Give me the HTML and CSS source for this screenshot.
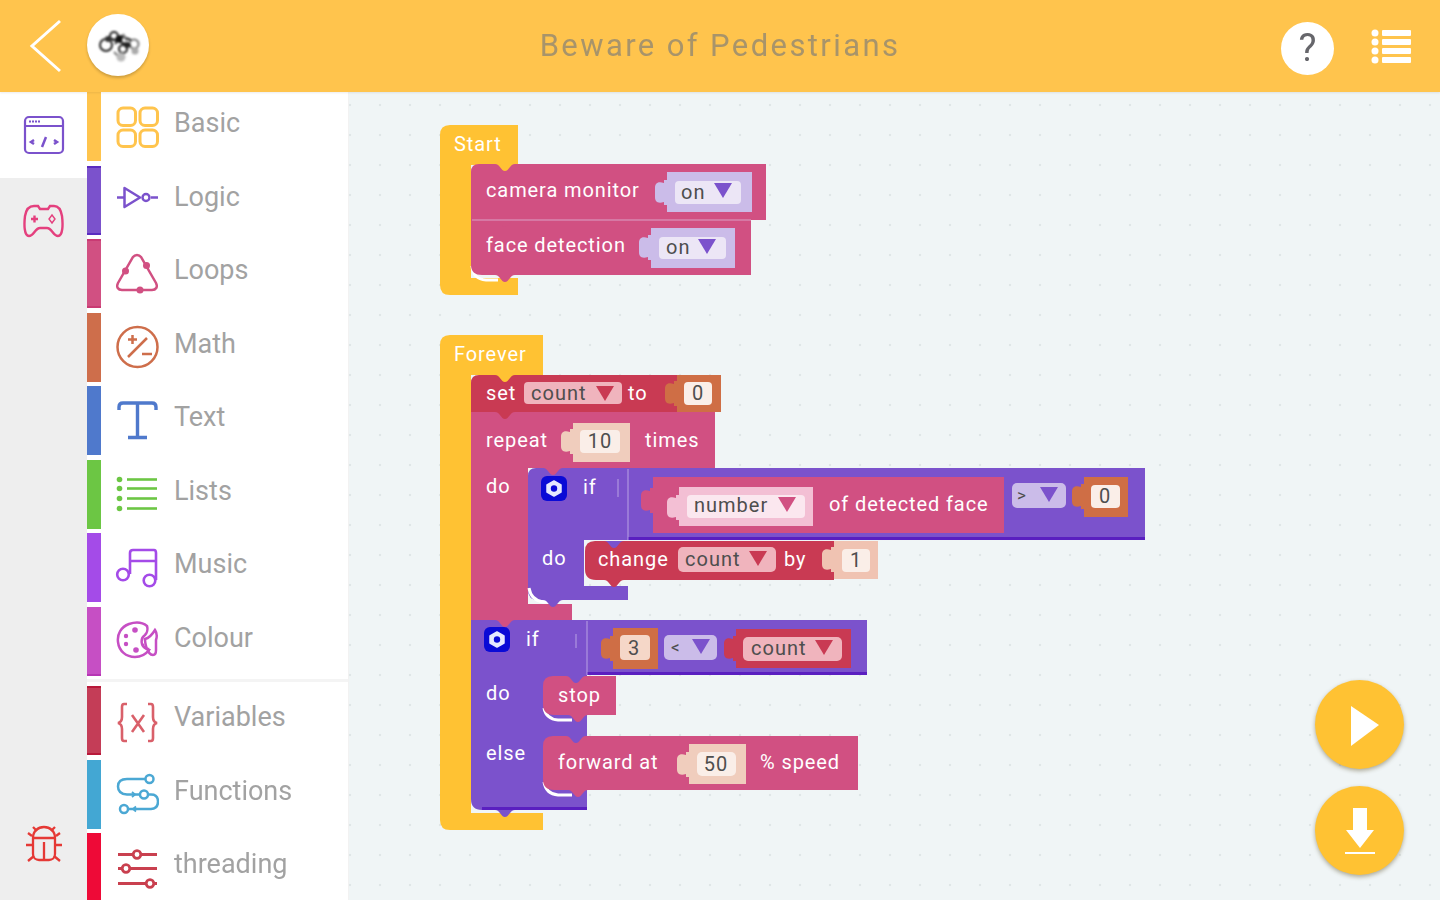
FILE: index.html
```html
<!DOCTYPE html>
<html lang="en">
<head>
<meta charset="utf-8">
<title>Beware of Pedestrians</title>
<link rel="stylesheet" href="styles.css">
</head>
<body>
<div class="app">
  <header class="topbar">
    <div class="top-left">
      <svg class="back" viewBox="0 0 36 56"><path d="M32 3 4 28l28 25"/></svg>
      <div class="logo">
        <svg viewBox="0 0 62 62" class="logo-art">
          <g fill="none" stroke="#222" stroke-width="2">
            <circle cx="19" cy="31" r="6"/><circle cx="27" cy="22" r="4"/><circle cx="36" cy="35" r="4"/><circle cx="47" cy="30" r="4.500" stroke="#777"/>
            <path d="M22 24l14 5 8 3M28 30l6-8 10 4"/><path d="M36 20l4 7M27 38l8 8" stroke="#777"/>
          </g>
          <circle cx="32" cy="25" r="3.500" fill="#111"/><circle cx="21" cy="25" r="3" fill="#333"/><circle cx="34" cy="43" r="4.500" fill="#bbb"/><circle cx="48" cy="37" r="3.500" fill="#aaa"/><circle cx="40" cy="31" r="3" fill="#222"/>
        </svg>
      </div>
    </div>
    <h1 class="title">Beware of Pedestrians</h1>
    <div class="top-right">
      <div class="help">?</div>
      <svg class="menu" viewBox="0 0 40 36"><g fill="#fff"><circle cx="4" cy="4" r="3.500"/><circle cx="4" cy="13" r="3.500"/><circle cx="4" cy="22" r="3.500"/><circle cx="4" cy="31" r="3.500"/><rect x="11" y="1" width="29" height="6" rx="1"/><rect x="11" y="10" width="29" height="6" rx="1"/><rect x="11" y="19" width="29" height="6" rx="1"/><rect x="11" y="28" width="29" height="6" rx="1"/></g></svg>
    </div>
  </header>
  <main class="main">
    <nav class="rail">
      <div class="rail-tab active">
        <svg class="rail-icon" viewBox="0 0 42 40" fill="none" stroke="#7B52CC" stroke-width="2.200"><rect x="2" y="2" width="38" height="36" rx="4"/><path d="M2 11h38"/><path d="M6 6.500h12" stroke-dasharray="2 1"/><path d="M11 25l-3 2 3 2M31 25l3 2-3 2M23 22l-4 10" stroke-width="2.500"/></svg>
      </div>
      <div class="rail-tab">
        <svg class="rail-icon" viewBox="0 0 42 36" fill="none" stroke="#E4407E" stroke-width="2.400"><path d="M11 3h4l2 3h8l2-3h4c5 0 7 4 8 10 1 8 1 20-4 20-5 0-6-8-11-8h-7c-5 0-6 8-11 8-5 0-5-12-4-20C3 7 6 3 11 3z"/><path d="M8 16h7M11.500 12.500v7"/><path d="M29 12l3 4-3 4-3-4z" stroke-width="1.400"/></svg>
      </div>
      <div class="rail-bottom">
        <svg class="bug" viewBox="0 0 40 38" fill="none" stroke="#E53935" stroke-width="2.300"><path d="M9 13c0-7 5-11 11-11s11 4 11 11v16c0 4-3 6-6 6H15c-3 0-6-2-6-6z"/><path d="M9 13h22M20 17v18M13 6 9 2M27 6l4-4M9 20H2M31 20h7M10 31l-6 5M30 31l6 5M8 11 4 8M32 11l4-3"/></svg>
      </div>
    </nav>

    <aside class="cats">
      <div class="cat"><span class="bar bar-basic"></span>
        <svg class="cat-icon" viewBox="0 0 44 44" fill="none" stroke="#FFC44D" stroke-width="3"><rect x="3" y="3" width="17.500" height="17.500" rx="5"/><rect x="25" y="3" width="17.500" height="17.500" rx="5"/><rect x="3" y="25" width="17.500" height="16.500" rx="5"/><rect x="25" y="25" width="17.500" height="16.500" rx="5"/></svg>
        <span class="cat-label">Basic</span></div>
      <div class="cat"><span class="bar bar-logic"></span>
        <svg class="cat-icon" viewBox="0 0 44 44" fill="none" stroke="#7B52CC" stroke-width="2.500"><path d="M2 19.500h7M36 19.500h7"/><path d="M9.500 10 25 19.500 9.500 29z" stroke-linejoin="round"/><circle cx="31" cy="19.500" r="3.500"/></svg>
        <span class="cat-label">Logic</span></div>
      <div class="cat"><span class="bar bar-loops"></span>
        <svg class="cat-icon" viewBox="0 0 44 44" fill="none" stroke="#D15082" stroke-width="2.500"><path d="M18 5a5 5 0 0 1 8 0L41 31c2 4 0 7-4 7H7c-4 0-6-3-4-7z"/><g fill="#D15082" stroke="none"><circle cx="10.500" cy="19" r="3.500"/><circle cx="31.500" cy="13.500" r="3.500"/><circle cx="25" cy="38" r="3.500"/></g></svg>
        <span class="cat-label">Loops</span></div>
      <div class="cat"><span class="bar bar-math"></span>
        <svg class="cat-icon" viewBox="0 0 44 44" fill="none" stroke="#CE6E4B" stroke-width="2.500"><circle cx="22.500" cy="22" r="20"/><path d="M13 32 32 13M13 14.500h9M17.500 10v9M27 29h10"/></svg>
        <span class="cat-label">Math</span></div>
      <div class="cat"><span class="bar bar-text"></span>
        <svg class="cat-icon" viewBox="0 0 44 44" fill="none" stroke="#4F79CC" stroke-width="3.400"><path d="M4 11V8q0-4 4-4h29q4 0 4 4v3M22.500 4v34M13 38.500h19"/></svg>
        <span class="cat-label">Text</span></div>
      <div class="cat"><span class="bar bar-lists"></span>
        <svg class="cat-icon" viewBox="0 0 44 44" fill="none" stroke="#6CC644" stroke-width="2.600"><path d="M12 7.500h30"/><path d="M12 16.500h30"/><path d="M12 26.500h30"/><path d="M12 36.500h30"/><g fill="#6CC644" stroke="none"><circle cx="4.500" cy="7.500" r="2.800"/><circle cx="4.500" cy="16.500" r="2.800"/><circle cx="4.500" cy="26.500" r="2.800"/><circle cx="4.500" cy="36.500" r="2.800"/></g></svg>
        <span class="cat-label">Lists</span></div>
      <div class="cat"><span class="bar bar-music"></span>
        <svg class="cat-icon" viewBox="0 0 44 44" fill="none" stroke="#A44BE8" stroke-width="2.600"><circle cx="8" cy="28.500" r="5.800"/><circle cx="34.500" cy="34.500" r="5.800"/><path d="M15 28V7q0-3 3-3h21q2 0 2 3v27M15 15h26"/></svg>
        <span class="cat-label">Music</span></div>
      <div class="cat"><span class="bar bar-colour"></span>
        <svg class="cat-icon" viewBox="0 0 44 44" fill="none" stroke="#C64FC4" stroke-width="2.500"><path d="M32 7C27 3 20 3 14 5 6 8 2 15 3 23c1 9 8 15 17 15 6 0 11-3 14-7-3-1-6-3-7-6-1-4 0-7 3-9 2-2 3-6 2-9z"/><path d="M30 20c4-1 7-4 10-9 2 3 2 7 1 10v10c0 3-1 5-3 5-3 0-5-3-5-6-2 0-3-7-3-10z"/><g fill="#C64FC4" stroke="none"><circle cx="20" cy="11" r="2.800"/><circle cx="11" cy="17" r="2.200"/><circle cx="11" cy="25" r="2.200"/><circle cx="21" cy="31" r="2.800"/><circle cx="28" cy="26" r="1.500"/></g></svg>
        <span class="cat-label">Colour</span></div>
      <div class="cat-divider"></div>
      <div class="cat"><span class="bar bar-vars"></span>
        <svg class="cat-icon" viewBox="0 0 44 44" fill="none" stroke="#D9606A" stroke-width="2.600"><path d="M12 5H9Q7 5 7 8v10q0 5-4 6 4 1 4 6v9q0 3 2 3h3M33 5h3q2 0 2 3v10q0 5 4 6-4 1-4 6v9q0 3-2 3h-3M17 16l12 17M29 16 17 33"/></svg>
        <span class="cat-label">Variables</span></div>
      <div class="cat"><span class="bar bar-funcs"></span>
        <svg class="cat-icon" viewBox="0 0 44 44" fill="none" stroke="#4BA8D4" stroke-width="2.500"><circle cx="34.500" cy="7" r="4"/><circle cx="29" cy="22.500" r="4"/><circle cx="9" cy="37" r="4"/><path d="M30.500 7H12q-9 0-9 7.500T12 22.500h13M33 22.500h3q7 0 7 7t-7 7.500H13"/><path d="M17 20l3 2.500-3 2.500M21 34.500 18 37l3 2.500" stroke-width="1.800"/></svg>
        <span class="cat-label">Functions</span></div>
      <div class="cat"><span class="bar bar-thread"></span>
        <svg class="cat-icon" viewBox="0 0 44 44" fill="none" stroke="#C9404F" stroke-width="2.800"><path d="M3 8.500h15M26 8.500h16M3 22.500h4M15 22.500h27M3 37.500h28M39 37.500h3"/><circle cx="22" cy="8.500" r="3.800"/><circle cx="11" cy="22.500" r="3.800"/><circle cx="35" cy="37.500" r="3.800"/></svg>
        <span class="cat-label">threading</span></div>
    </aside>

    <section class="workspace">
      <svg class="blocks" viewBox="349 92 1091 808" width="1091" height="808">
        <defs>
          <path id="tab" d="M12 0H9V3C2 1 0 4 0 8V17C0 21 2 24 9 22V25H12Z"/>
          <path id="notch" d="M0 0C5 0 6 7 10 7S15 0 20 0Z"/>
          <polygon id="tri" points="0,0 18,0 9,15"/>
          <g id="gear">
            <rect x="0" y="0" width="26" height="25" rx="6" class="c-blue"/>
            <polygon points="13,5 20,9 20,16 13,20 6,16 6,9" class="gear"/>
            <circle cx="13" cy="12.500" r="3.200" class="c-blue"/>
          </g>
        </defs>

        <!-- Start -->
        <path class="c-yellow" d="M450 125H518V165H471V278H518V295H450Q440 295 440 285V135Q440 125 450 125Z"/>
        <path class="hi" d="M472 266Q473 279 486 280H498"/>
        <path class="c-pink" d="M479 164H766V220H471V172Q471 164 479 164Z"/>
        <use href="#notch" x="495" y="164" class="c-yellow"/>
        <path class="c-pink" d="M471 220H751V275H482Q471 275 471 265Z"/>
        <use href="#notch" x="495" y="220" class="c-pink"/>
        <path class="line" d="M472 220H751"/>
        <use href="#notch" x="495" y="275" class="c-pink"/>
        <text class="t" x="454" y="151">Start</text>
        <text class="t" x="486" y="197">camera monitor</text>
        <use href="#tab" x="655" y="180" class="c-lilac"/>
        <rect class="c-lilac" x="667" y="172" width="85" height="40"/>
        <rect class="p-lilac" x="675" y="181" width="66" height="23" rx="4"/>
        <text class="d" x="681" y="199">on</text>
        <use href="#tri" x="714" y="183" class="c-purple"/>
        <text class="t" x="486" y="252">face detection</text>
        <use href="#tab" x="639" y="235" class="c-lilac"/>
        <rect class="c-lilac" x="651" y="228" width="84" height="40"/>
        <rect class="p-lilac" x="659" y="237" width="67" height="22" rx="4"/>
        <text class="d" x="666" y="254">on</text>
        <use href="#tri" x="698" y="239" class="c-purple"/>

        <!-- Forever -->
        <path class="c-yellow" d="M450 335H543V375H471V813H543V830H450Q440 830 440 820V345Q440 335 450 335Z"/>
        <text class="t" x="454" y="361">Forever</text>

        <!-- repeat -->
        <path class="c-pink" d="M471 412H715V468H528V604H572V622H471Z"/>
        <text class="t" x="486" y="447">repeat</text>
        <use href="#tab" x="561" y="429" class="c-peach"/>
        <rect class="c-peach" x="573" y="423" width="57" height="39"/>
        <rect class="p-peach" x="580" y="430" width="40" height="23" rx="4"/>
        <text class="d m" x="600" y="448">10</text>
        <text class="t" x="645" y="447">times</text>
        <text class="t" x="486" y="493">do</text>

        <!-- set -->
        <path class="c-crimson" d="M479 375H677V412H471V383Q471 375 479 375Z"/>
        <use href="#notch" x="495" y="375" class="c-yellow"/>
        <use href="#notch" x="495" y="412" class="c-crimson"/>
        <text class="t" x="486" y="400">set</text>
        <rect class="p-crimson" x="524" y="382" width="98" height="22" rx="4"/>
        <text class="d" x="531" y="400">count</text>
        <use href="#tri" x="596" y="386" class="c-crimson"/>
        <text class="t" x="628" y="400">to</text>
        <use href="#tab" x="665" y="381" class="c-orange"/>
        <rect class="c-orange" x="677" y="375" width="44" height="37"/>
        <rect class="p-peach" x="684" y="382" width="28" height="23" rx="4"/>
        <text class="d m" x="698" y="400">0</text>

        <!-- inner if -->
        <path class="c-purple" d="M536 468H1145V540H584V586H628V600H538Q528 600 528 590V476Q528 468 536 468Z"/>
        <path class="c-indigo" d="M628 537H1145V540H628Z"/>
        <path class="hi" d="M529 588Q531 600 543 602H555"/>
        <path class="line" d="M628 469V540"/>
        <path class="line" d="M618 479V497"/>
        <use href="#notch" x="543" y="468" class="c-pink"/>
        <use href="#notch" x="543" y="600" class="c-purple"/>
        <use href="#gear" x="541" y="476"/>
        <text class="t" x="583" y="494">if</text>
        <text class="t" x="542" y="565">do</text>

        <use href="#tab" x="641" y="488" class="c-pink"/>
        <rect class="c-pink" x="653" y="477" width="351" height="56"/>
        <use href="#tab" x="667" y="495" class="c-rose"/>
        <rect class="c-rose" x="679" y="487" width="134" height="39"/>
        <rect class="p-rose" x="687" y="495" width="118" height="23" rx="4"/>
        <text class="d" x="694" y="512">number</text>
        <use href="#tri" x="778" y="497" class="c-pink"/>
        <text class="t" x="829" y="511">of detected face</text>
        <rect class="c-lilac" x="1012" y="483" width="54" height="25" rx="5"/>
        <text class="d op" x="1017" y="501">&gt;</text>
        <use href="#tri" x="1040" y="487" class="c-purple"/>
        <use href="#tab" x="1072" y="484" class="c-orange"/>
        <rect class="c-orange" x="1084" y="477" width="44" height="40"/>
        <rect class="p-peach" x="1091" y="485" width="29" height="23" rx="4"/>
        <text class="d m" x="1105" y="503">0</text>

        <!-- change -->
        <path class="c-crimson" d="M595 541H834V580H596Q585 580 585 569V551Q585 541 595 541Z"/>
        <use href="#notch" x="604" y="541" class="c-purple"/>
        <use href="#notch" x="604" y="580" class="c-crimson"/>
        <text class="t" x="598" y="566">change</text>
        <rect class="p-crimson" x="678" y="547" width="98" height="25" rx="5"/>
        <text class="d" x="685" y="566">count</text>
        <use href="#tri" x="749" y="551" class="c-crimson"/>
        <text class="t" x="784" y="566">by</text>
        <use href="#tab" x="822" y="547" class="c-salmon"/>
        <rect class="c-salmon" x="834" y="541" width="44" height="38"/>
        <rect class="p-peach" x="842" y="549" width="28" height="23" rx="4"/>
        <text class="d m" x="856" y="567">1</text>

        <!-- second if -->
        <path class="c-purple" d="M471 620H867V675H587V810H482Q471 810 471 799Z"/>
        <path class="c-indigo" d="M587 672H867V675H587Z"/>
        <path class="c-indigo" d="M482 807H587V810H482Z"/>
        <path class="line" d="M587 621V675"/>
        <path class="line" d="M576 634V648"/>
        <use href="#notch" x="495" y="620" class="c-pink"/>
        <use href="#notch" x="495" y="810" class="c-purple"/>
        <use href="#gear" x="484" y="627"/>
        <text class="t" x="526" y="646">if</text>
        <text class="t" x="486" y="700">do</text>
        <text class="t" x="486" y="760">else</text>
        <use href="#tab" x="601" y="636" class="c-orange"/>
        <rect class="c-orange" x="613" y="628" width="45" height="41"/>
        <rect class="p-salmon" x="620" y="635" width="30" height="25" rx="4"/>
        <text class="d m" x="634" y="655">3</text>
        <rect class="c-lilac" x="664" y="635" width="53" height="25" rx="5"/>
        <text class="d op" x="671" y="653">&lt;</text>
        <use href="#tri" x="692" y="639" class="c-purple"/>
        <use href="#tab" x="724" y="636" class="c-crimson"/>
        <rect class="c-crimson" x="736" y="629" width="115" height="39"/>
        <rect class="p-crimson" x="743" y="637" width="99" height="24" rx="5"/>
        <text class="d" x="751" y="655">count</text>
        <use href="#tri" x="815" y="640" class="c-crimson"/>

        <!-- stop -->
        <path class="hi" d="M544 708Q546 719 558 720H572"/>
        <path class="c-pink" d="M553 676H616V715H554Q543 715 543 704V686Q543 676 553 676Z"/>
        <use href="#notch" x="566" y="676" class="c-purple"/>
        <use href="#notch" x="568" y="715" class="c-pink"/>
        <text class="t" x="558" y="702">stop</text>

        <!-- forward -->
        <path class="hi" d="M544 782Q546 794 558 795H572"/>
        <path class="c-pink" d="M553 736H858V790H554Q543 790 543 779V746Q543 736 553 736Z"/>
        <use href="#notch" x="566" y="736" class="c-purple"/>
        <use href="#notch" x="568" y="790" class="c-pink"/>
        <text class="t" x="558" y="769">forward at</text>
        <use href="#tab" x="677" y="752" class="c-peach"/>
        <rect class="c-peach" x="689" y="744" width="57" height="40"/>
        <rect class="p-peach" x="697" y="752" width="39" height="24" rx="5"/>
        <text class="d m" x="716" y="771">50</text>
        <text class="t" x="760" y="769">% speed</text>
      </svg>
      <button class="fab fab-run"><svg viewBox="0 0 28 40"><path d="M0 0 28 19 0 40z" fill="#fff"/></svg></button>
      <button class="fab fab-dl"><svg viewBox="0 0 30 46"><path d="M8 0h14v22h7L15 40 1 22h7z" fill="#fff"/><rect y="44" width="30" height="2.500" fill="#fff"/></svg></button>
    </section>
  </main>
</div>
</body>
</html>
```
FILE: styles.css
```css
* { box-sizing: border-box; }
html, body { margin: 0; height: 100%; overflow: hidden; background: #f0f5f6; }
.app { width: 1440px; height: 900px; display: flex; flex-direction: column; font-family: Roboto, "Liberation Sans", sans-serif; filter: blur(0.7px); }

.topbar { height: 92px; flex: none; background: #ffc44d; display: flex; align-items: center; justify-content: space-between; position: relative; box-shadow: 0 1px 2px rgba(0,0,0,.08); z-index: 2; }
.top-left { display: flex; align-items: center; gap: 23px; padding-left: 28px; width: 200px; }
.back { width: 36px; height: 56px; fill: none; stroke: #fff; stroke-width: 3; flex: none; }
.logo { width: 62px; height: 62px; border-radius: 50%; background: #fff; box-shadow: 0 2px 3px rgba(0,0,0,.2); margin-top: -3px; flex: none; }
.logo-art { width: 62px; height: 62px; display: block; filter: blur(1px); }
.title { margin: -2px 0 0; font-size: 31px; font-weight: 400; letter-spacing: 2.4px; color: #a8946a; white-space: nowrap; }
.top-right { display: flex; align-items: center; gap: 37px; padding-right: 29px; width: 200px; justify-content: flex-end; }
.help { width: 53px; height: 53px; border-radius: 50%; background: #fff; color: #66666b; font-size: 38px; font-weight: 400; line-height: 53px; text-align: center; margin-top: 5px; flex: none; }
.menu { width: 40px; height: 36px; flex: none; margin-top: 1px; }

.main { flex: 1; display: flex; min-height: 0; }
.rail { width: 87px; flex: none; background: #eeeeee; display: flex; flex-direction: column; }
.rail-tab { height: 86px; display: flex; align-items: center; justify-content: center; }
.rail-tab.active { background: #fff; }
.rail-icon { width: 42px; height: 40px; }
.rail-bottom { margin-top: auto; padding-bottom: 37px; display: flex; justify-content: center; }
.bug { width: 40px; height: 38px; }

.cats { width: 262px; flex: none; background: #fff; display: flex; flex-direction: column; border-right: 1px solid #f2f2f2; }
.cat { height: 69px; margin-bottom: 4.5px; display: flex; align-items: center; flex: none; }
.bar { width: 14px; height: 100%; flex: none; margin-right: 14px; }
.bar-basic { background: #ffc44d; }
.bar-logic { background: #7b52cc; border-top: 2px solid #5a2cc0; border-bottom: 2px solid #5a2cc0; }
.bar-loops { background: #d15082; border-top: 2px solid #c93a73; border-bottom: 2px solid #c93a73; }
.bar-math { background: #ce6e4b; }
.bar-text { background: #4f79cc; }
.bar-lists { background: #6cc644; }
.bar-music { background: #a44be8; }
.bar-colour { background: #c64fc4; border-bottom: 2px solid #b636b4; }
.bar-vars { background: #c43d57; border-top: 2px solid #b8193a; border-bottom: 2px solid #b8193a; }
.bar-funcs { background: #43a7d3; }
.bar-thread { background: #ee0a37; }
.cat-icon { width: 44px; height: 44px; flex: none; margin-right: 15px; }
.cat-label { font-size: 27px; letter-spacing: 0; color: #a2a2a2; padding-bottom: 7px; }
.cat-divider { height: 6px; margin-top: -4.5px; margin-bottom: 4.5px; border-bottom: 3px solid #f4f4f4; flex: none; }

.workspace { flex: 1; position: relative; background-color: #f0f5f6; background-image: radial-gradient(circle, #dfe6e7 1.2px, transparent 1.6px); background-size: 30px 30px; background-position: -164px -2px; overflow: hidden; }
.blocks { display: block; }
.t { font-size: 20px; fill: #fff; font-family: Roboto, sans-serif; letter-spacing: .9px; }
.d { font-size: 20px; fill: #4e4e4e; font-family: Roboto, sans-serif; letter-spacing: 1px; }
.m { text-anchor: middle; }
.op { font-size: 17px; }
.hi { fill: none; stroke: #fff; stroke-width: 3; }
.line { fill: none; stroke: #e3d8f5; stroke-width: 1; opacity: .6; }
.gear { fill: #e6e9ff; stroke: #e6e9ff; stroke-width: 1.5; stroke-linejoin: round; }
.c-yellow { fill: #ffc233; }
.c-pink { fill: #d15082; }
.c-crimson { fill: #c93a53; }
.c-purple { fill: #7b52cc; }
.c-indigo { fill: #5a1fc0; }
.c-orange { fill: #cf6e45; }
.c-blue { fill: #0a0ad6; }
.c-lilac { fill: #cbbce9; }
.c-peach { fill: #f0cdbd; }
.c-salmon { fill: #f0c3b2; }
.c-rose { fill: #f3bfd4; }
.p-lilac { fill: #ece6f6; }
.p-peach { fill: #faeee8; }
.p-salmon { fill: #f5d7c8; }
.p-rose { fill: #fbe7ef; }
.p-crimson { fill: #f0b4bd; }

.fab { position: absolute; left: 966px; width: 89px; height: 89px; border: 0; padding: 0; border-radius: 50%; background: #ffc233; box-shadow: 0 2px 4px rgba(90,80,40,.45); display: flex; align-items: center; justify-content: center; }
.fab-run { top: 588px; }
.fab-run svg { width: 28px; height: 40px; margin: 2px 0 0 10px; }
.fab-dl { top: 694px; }
.fab-dl svg { width: 30px; height: 46px; }
```
